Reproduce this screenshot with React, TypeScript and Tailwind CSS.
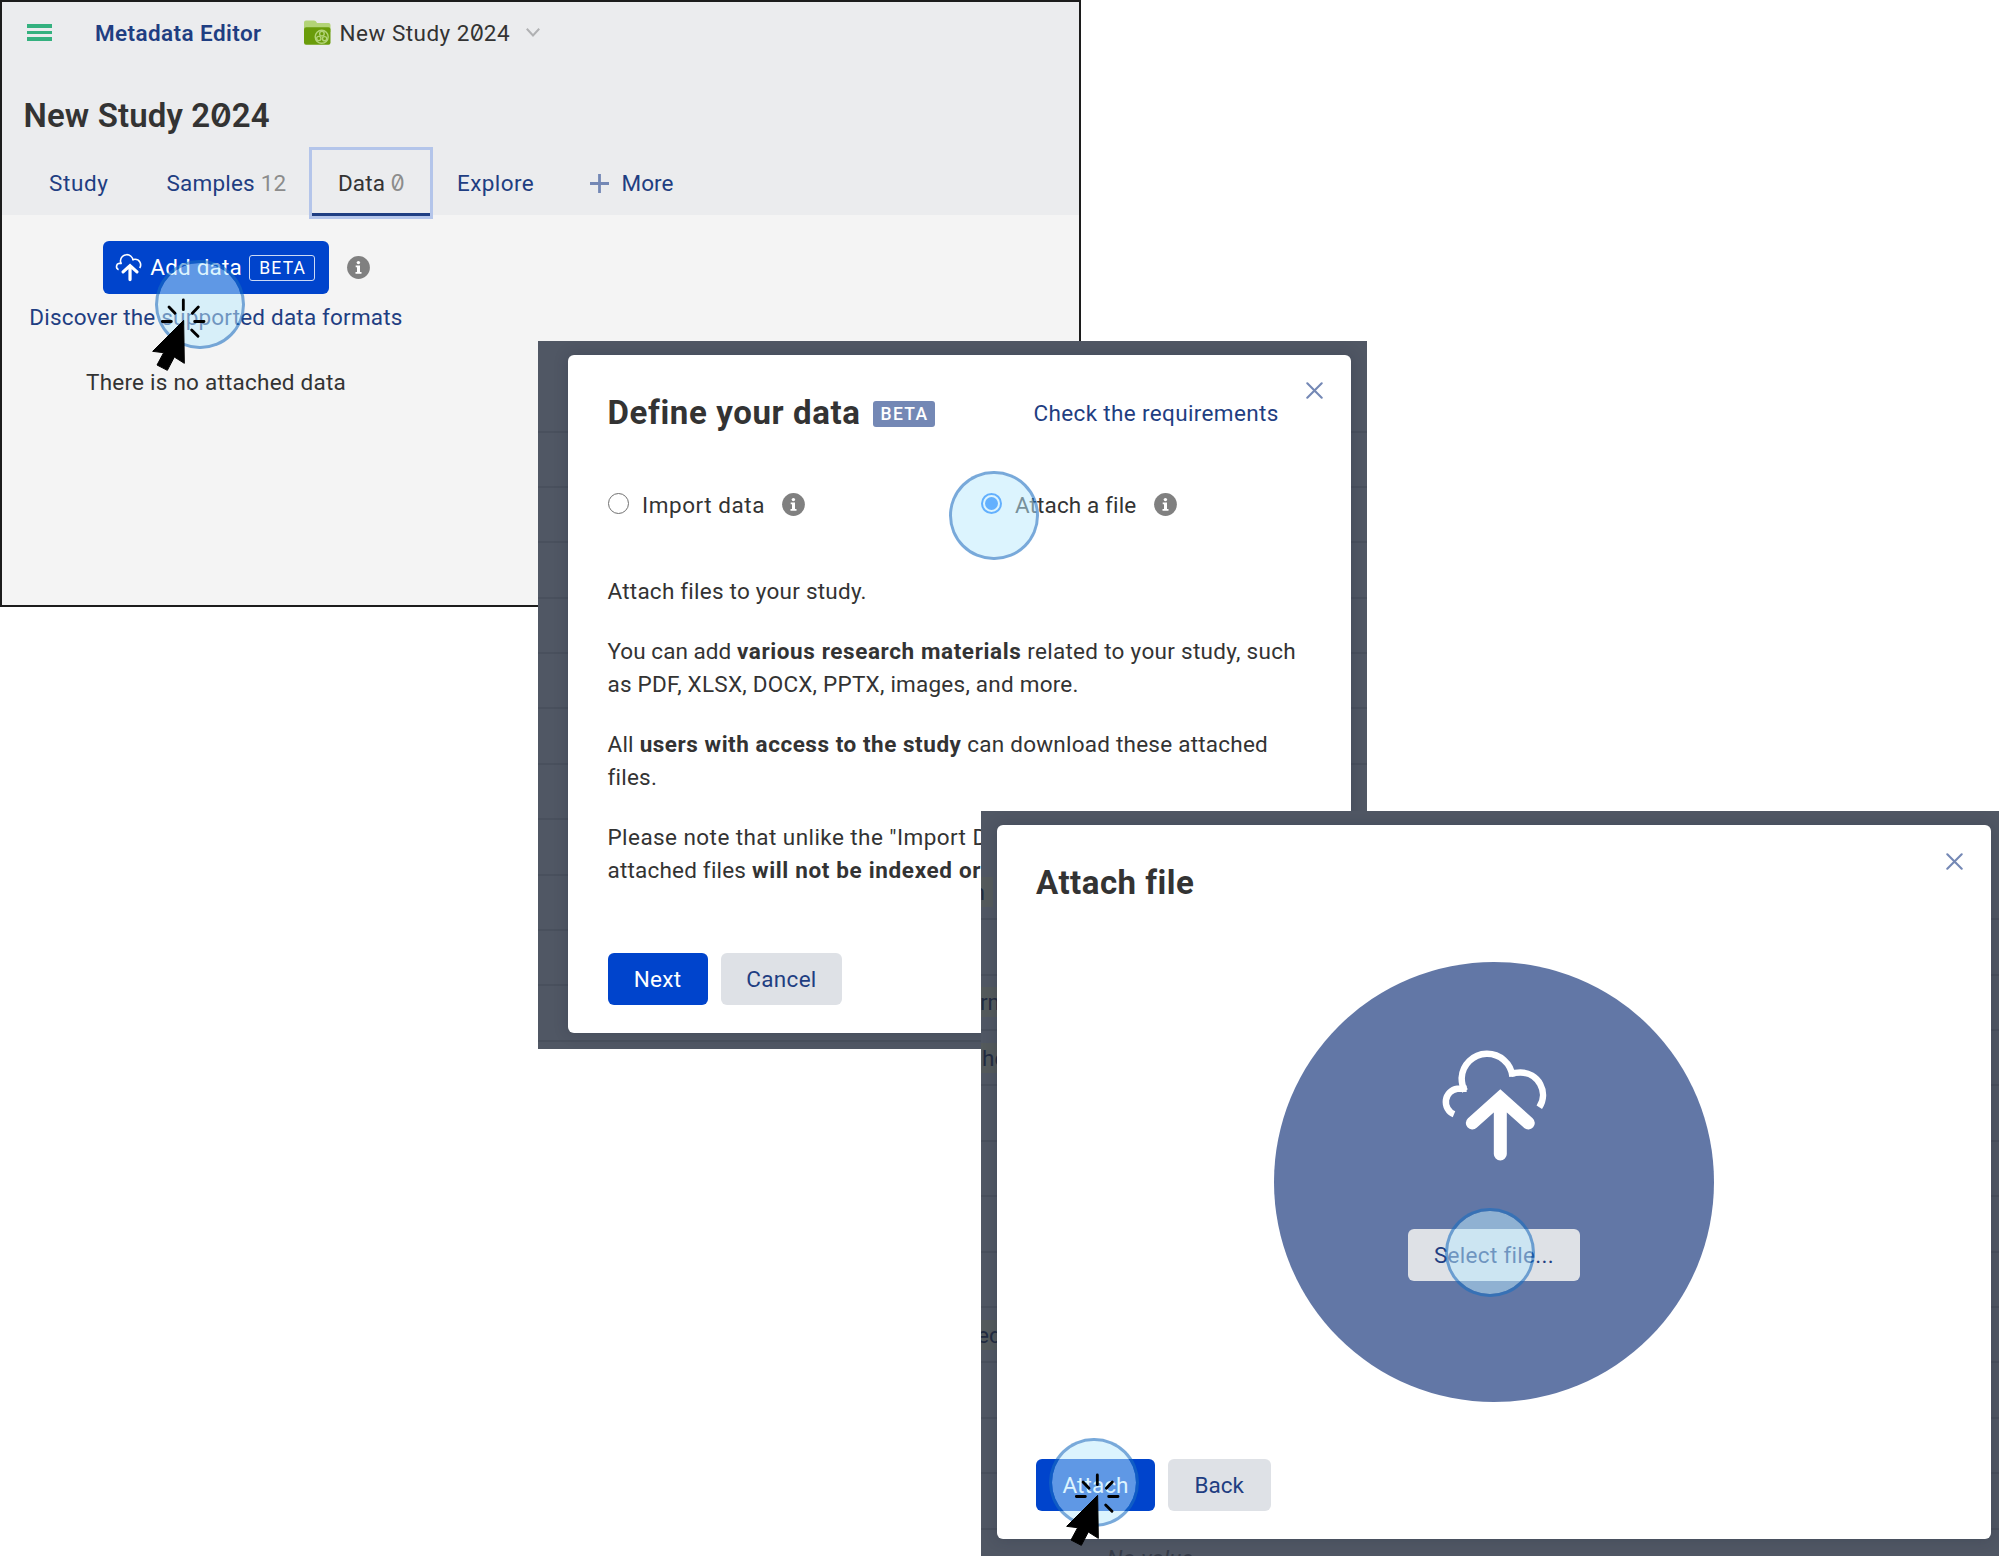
import type { ReactNode } from "react";

function Zero() {
  return (
    <span className="inline-block -mx-[0.2px] font-[Inter] tracking-normal" style={{ fontFeatureSettings: '"zero"' }}>
      0
    </span>
  );
}

function CloudUpload({ className }: { className: string }) {
  return (
    <svg viewBox="570 320 325 345" fill="none" stroke="currentColor" className={className}>
      <path d="M615 521.500 A40 40 0 0 1 625 445 H653" strokeWidth="19.500" transform="translate(-3 0)" />
      <path d="M645 452 Q635 436 635 413 A76.500 76.500 0 0 1 787.500 409" strokeWidth="19.500" />
      <path d="M782 401 Q794 396.500 811 396.500 A67.500 67.500 0 0 1 868 501" strokeWidth="19.500" />
      <path d="M667 548 L751 473 L835 548 M751 473 V641" strokeWidth="39" strokeLinecap="round" strokeMiterlimit="6" />
    </svg>
  );
}

function Info() {
  return (
    <svg viewBox="0 0 23 23" className="size-[23px] shrink-0">
      <circle cx="11.5" cy="11.5" r="11.4" fill="#808080" />
      <circle cx="11.4" cy="6.600" r="1.700" fill="#fff" />
      <path d="M8.700 9.500h4.300v6.500h1.500v1.700H8.500V16H10v-4.800H8.700z" fill="#fff" />
    </svg>
  );
}

function Folder() {
  return (
    <svg viewBox="0 0 27 25" className="h-[25px] w-[27px]">
      <path d="M0 2.500Q0 0.500 2 0.500H10Q12 0.500 12.600 2.200L13 3H24.500Q26.500 3 26.500 5V12H0z" fill="#B3D477" />
      <path d="M0 9.500Q0 7.200 2.300 7.200H24.500Q26.500 7.200 26.500 9.500V22.500Q26.500 24.700 24.500 24.700H2Q0 24.700 0 22.500z" fill="#6A9C0A" />
      <g fill="none" stroke="#B3D477" strokeWidth="1.4">
        <circle cx="17.700" cy="16.800" r="6.500" />
        <circle cx="17.900" cy="13.700" r="2.300" />
        <circle cx="14.800" cy="18.500" r="2.100" />
        <circle cx="20.600" cy="18.700" r="2.100" />
      </g>
    </svg>
  );
}

function Close({ className }: { className: string }) {
  return (
    <svg viewBox="0 0 17 17" className={`absolute size-[17px] ${className}`} stroke="#7488B5" strokeWidth="2.1" strokeLinecap="round">
      <path d="M1.300 1.300l14.400 14.400M15.700 1.300L1.300 15.700" />
    </svg>
  );
}

function Spot({ className }: { className: string }) {
  return (
    <div
      className={`absolute h-[89px] w-[90px] rounded-full border-3 border-[rgba(25,109,192,0.59)] bg-[rgba(187,233,253,0.51)] bg-clip-padding ${className}`}
    />
  );
}

function Cursor({ className }: { className: string }) {
  return (
    <svg viewBox="286 520 168 224" className={`absolute h-[74.700px] w-[56px] ${className}`}>
      <path
        d="M384 587L386 716L356 697L335 737L304 721L324 684L291 680Z"
        fill="#000"
        stroke="#000"
        strokeWidth="3"
        strokeLinejoin="round"
      />
      <path
        d="M383 526V555M340 547L358 566M428 547L410 566M320 590.500H347M417 590.500H445M408 616L427 635"
        stroke="#000"
        strokeWidth="8.500"
        strokeLinecap="round"
      />
    </svg>
  );
}

function Button({ primary, className, children }: { primary?: boolean; className: string; children: ReactNode }) {
  return (
    <button
      className={`flex h-[52px] items-center justify-center rounded-[6px] ${
        primary ? "bg-[#0044CC] text-white" : "bg-[#DEE1E6] text-[#1F3E82]"
      } ${className}`}
    >
      {children}
    </button>
  );
}

function Rows({ first, count }: { first: string; count: number }) {
  return (
    <div className="absolute inset-0 overflow-hidden">
      <div className={`border-b-2 border-[#49505D] ${first}`} />
      {Array.from({ length: count }, (_, i) => (
        <div key={i} className="h-[55.400px] border-b-2 border-[#49505D]" />
      ))}
    </div>
  );
}

function StudyWindow() {
  return (
    <section className="absolute top-0 left-0 h-[607px] w-[1081px] border-2 border-[#1c1c1c] bg-[#F4F4F4]">
      <header className="h-[213px] bg-[#EBECEE]">
        <div className="flex h-[61px] items-center">
          <div className="ml-[25px] flex w-[25px] flex-col gap-[3.200px]">
            <div className="h-[3.600px] bg-[#34B17F]" />
            <div className="h-[3.600px] bg-[#34B17F]" />
            <div className="h-[3.600px] bg-[#34B17F]" />
          </div>
          <div className="ml-[43px] w-[208.500px] font-semibold tracking-[0.400px] text-[#1F3E82]">Metadata Editor</div>
          <Folder />
          <div className="ml-[9px] w-[186.500px] tracking-[0.480px]">
            New Study 2<Zero />24
          </div>
          <svg viewBox="0 0 14 9" className="h-[9px] w-[14px]" fill="none" stroke="#B0B1B3" strokeWidth="2">
            <path d="M0.800 0.800L7 7.500L13.200 0.800" />
          </svg>
        </div>
        <h1 className="mt-[30px] ml-[21.500px] text-[33px] leading-[44px] font-semibold tracking-[0.130px]">
          New Study 2<Zero />24
        </h1>
        <nav className="mt-[9px] ml-[23px] flex h-[72px] items-center text-[#1F3E82]">
          <div className="w-[117.500px] pl-6 tracking-[0.600px]">Study</div>
          <div className="w-[166.500px] pl-6 tracking-[0.200px]">
            Samples <span className="text-[#8C8C8C]">12</span>
          </div>
          <div className="flex h-[72.500px] w-[124px] flex-col border-3 border-[#B4C5EA] text-[#333]">
            <div className="flex flex-1 items-center pl-[26px] tracking-[0.100px]">
              <span>
                Data{" "}
                <span className="text-[#8C8C8C]">
                  <Zero />
                </span>
              </span>
            </div>
            <div className="-mt-[3.500px] h-[3.500px] bg-[#1F3E82]" />
          </div>
          <div className="w-[156.500px] pl-6 tracking-[0.400px]">Explore</div>
          <svg viewBox="0 0 19 19" className="size-[19px]" stroke="#7488B5" strokeWidth="2.800">
            <path d="M9.500 0V19M0 9.500H19" />
          </svg>
          <div className="ml-[13px]">More</div>
        </nav>
      </header>
      <div className="flex w-[428px] flex-col items-center pt-[26px]">
        <div className="relative">
          <button className="flex h-[52.500px] w-[226.500px] items-center rounded-[6px] bg-[#0044CC] pl-[12.500px] text-white">
            <CloudUpload className="h-[28.500px] w-[27px] shrink-0" />
            <span className="ml-[8px] w-[99px] shrink-0 text-left tracking-[0.200px]">Add data</span>
            <span className="mt-px flex h-[25.500px] w-[66px] shrink-0 items-center justify-center rounded-[3px] border-[1.500px] border-white/80 pl-px text-[17.500px] tracking-[1.200px]">
              BETA
            </span>
          </button>
          <div className="absolute top-[15px] left-[244.500px]">
            <Info />
          </div>
        </div>
        <a className="mt-[7.500px] tracking-[0.190px] text-[#1F3E82]">Discover the supported data formats</a>
        <p className="mt-[33px] tracking-[0.230px]">There is no attached data</p>
      </div>
      <Spot className="top-[257.500px] left-[153px]" />
      <Cursor className="top-[296px] left-[149px]" />
    </section>
  );
}

function DefineWindow() {
  return (
    <section className="absolute top-[341px] left-[538px] h-[708px] w-[829px] bg-[#505764]">
      <Rows first="h-[91.500px]" count={11} />
      <div className="absolute top-[13.500px] left-[30px] h-[678px] w-[782.500px] rounded-[6px] bg-white pt-9 pl-[39.500px] shadow-[0_0_14px_rgba(30,40,60,0.25)]">
        <Close className="top-[27px] right-[27.500px]" />
        <div className="flex h-11 items-center">
          <h2 className="mt-px w-[265.500px] text-[33px] leading-[44px] font-bold tracking-[0.620px]">Define your data</h2>
          <span className="mt-[2px] flex h-[26px] w-[62px] items-center justify-center rounded-[3px] bg-[#7488B5] pl-px text-[17.500px] font-medium tracking-[1.300px] text-white">
            BETA
          </span>
          <a className="mt-px ml-[98.500px] tracking-[0.350px] text-[#1F3E82]">Check the requirements</a>
        </div>
        <div className="mt-[54px] flex h-8 items-center">
          <span className="mb-[2px] size-[21.500px] rounded-full border-[1.500px] border-[#707070]" />
          <span className="ml-[13px] w-[140px] tracking-[0.550px]">Import data</span>
          <Info />
          <span className="mb-[2px] ml-[175.500px] flex size-[21.500px] items-center justify-center rounded-full border-2 border-[#0A75FF]">
            <span className="size-[12.500px] rounded-full bg-[#0A75FF]" />
          </span>
          <span className="ml-[13px] w-[138.500px] tracking-[0.120px]">Attach a file</span>
          <Info />
        </div>
        <div className="mt-[54.500px] flex flex-col gap-[27.500px] leading-[32.700px] whitespace-nowrap">
          <p className="tracking-[0.230px]">Attach files to your study.</p>
          <p className="tracking-[0.230px]">
            <span className="tracking-[0.050px]">You can add </span>
            <b className="tracking-[0.600px]">various research materials</b>
            <span className="tracking-[0.290px]"> related to your study, such</span>
            <br />
            as PDF, XLSX, DOCX, PPTX, images, and more.
          </p>
          <p className="tracking-[0.230px]">
            All <b className="tracking-[0.540px]">users with access to the study</b> can download these attached
            <br />
            files.
          </p>
          <p className="tracking-[0.430px]">
            Please note that unlike the "Import D
            <br />
            <span className="tracking-[0.200px]">attached files </span>
            <b className="tracking-[0.650px]">will not be indexed or</b>
          </p>
        </div>
        <div className="mt-[66.500px] flex gap-[13.500px]">
          <Button primary className="w-[100px] tracking-[0.300px]">Next</Button>
          <Button className="w-[121px] tracking-[0.300px]">Cancel</Button>
        </div>
      </div>
      <Spot className="top-[130px] left-[411px]" />
    </section>
  );
}

const clipped = [
  { text: "n", box: "top-[66px] w-[12px]", shift: "-ml-[8.500px]" },
  { text: "rm", box: "top-[176px] w-[16px]", shift: "-ml-[1px]" },
  { text: "he", box: "top-[232px] w-[16px]", shift: "ml-[1px]" },
  { text: "ed", box: "top-[509px] w-[16px]", shift: "-ml-[4px]" },
];

function AttachWindow() {
  return (
    <section className="absolute top-[811px] left-[981px] h-[745px] w-[1018px] overflow-hidden bg-[#505764]">
      <Rows first="h-[109.300px]" count={11} />
      {clipped.map((c) => (
        <div key={c.text} className={`absolute left-0 h-[30px] overflow-hidden bg-[#545A5C] leading-[30px] text-[#222B40] ${c.box}`}>
          <span className={`block ${c.shift}`}>{c.text}</span>
        </div>
      ))}
      <p className="absolute top-[731px] left-[126px] tracking-[0.200px] text-[#363C49] italic">No value</p>
      <div className="absolute top-[14px] left-4 flex h-[714px] w-[994px] flex-col rounded-[6px] bg-white pt-9 pl-[39px] shadow-[0_0_14px_rgba(30,40,60,0.25)]">
        <Close className="top-[28px] right-[28px]" />
        <h2 className="text-[33px] leading-[44px] font-bold tracking-[0.500px]">Attach file</h2>
        <div className="mt-[57px] ml-[238px] flex size-[440px] flex-col items-center rounded-full bg-[#6277A6] pt-[85px] text-white">
          <CloudUpload className="h-[115px] w-[108.300px]" />
          <Button className="mt-[66.500px] w-[171.500px] tracking-[0.300px]">Select file...</Button>
        </div>
        <div className="mt-[57px] flex gap-[13px]">
          <Button primary className="w-[119px] tracking-[0.100px]">Attach</Button>
          <Button className="w-[102.500px]">Back</Button>
        </div>
      </div>
      <Spot className="top-[396.500px] left-[463.500px]" />
      <Spot className="top-[626.500px] left-[67.500px]" />
      <Cursor className="top-[662px] left-[84px]" />
    </section>
  );
}

export default function App() {
  return (
    <main className="relative h-[1556px] w-[1999px] overflow-hidden bg-white font-[Roboto,sans-serif] text-[22.500px] leading-8 text-[#333]">
      <StudyWindow />
      <DefineWindow />
      <AttachWindow />
    </main>
  );
}
